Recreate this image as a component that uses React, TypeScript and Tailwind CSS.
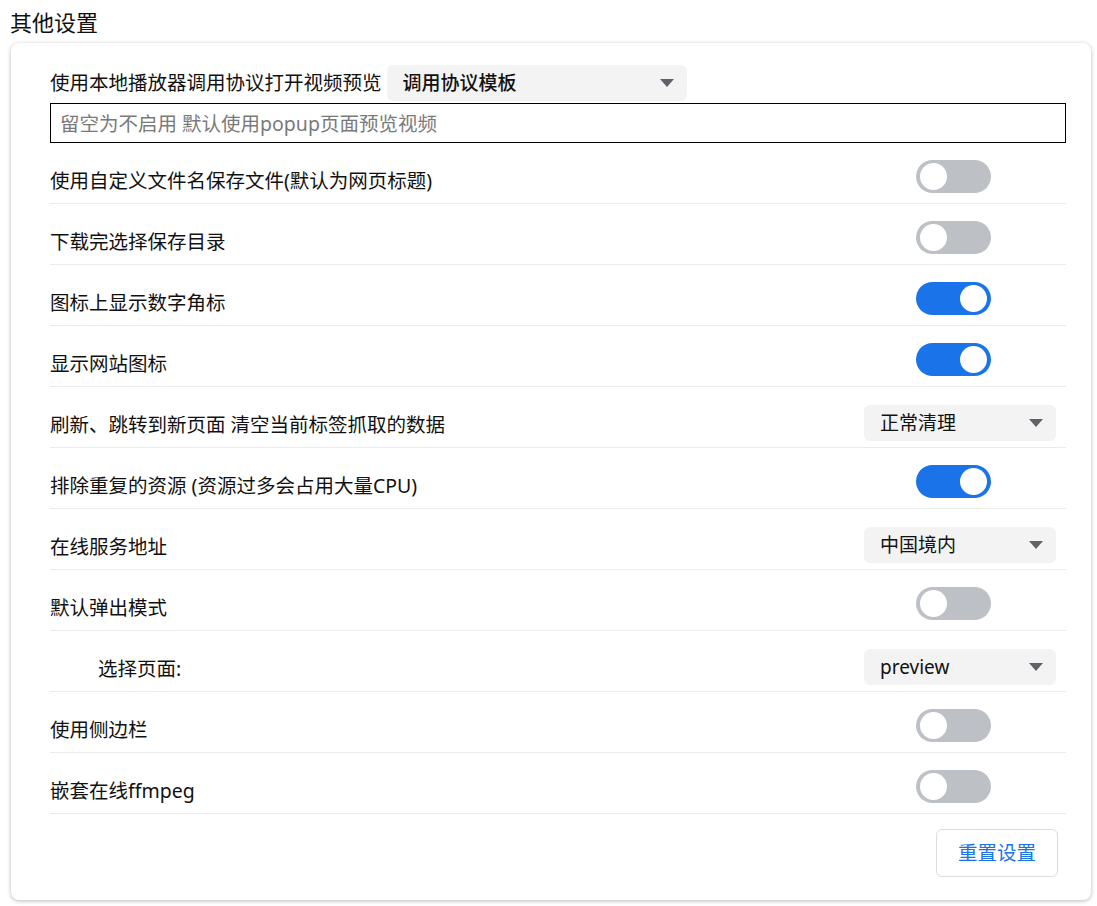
import React, { useState } from "react";

const FONT = {
  fontFamily: '"Noto Sans", "Noto Sans CJK SC", sans-serif',
};

const Toggle = ({ on, onChange }: { on: boolean; onChange: () => void }) => (
  <button
    onClick={onChange}
    className={`flex items-center w-[75px] h-[33px] rounded-full px-[4px] ${
      on ? "bg-[#1a73e8] justify-end" : "bg-[#bdc1c6] justify-start"
    }`}
  >
    <span className="block w-[27px] h-[27px] rounded-full bg-white" />
  </button>
);

const Select = ({ value, className = "" }: { value: string; className?: string }) => (
  <div
    className={`flex items-center justify-between h-[36px] rounded-md bg-[#f3f3f3] pl-4 pr-[13px] ${className}`}
  >
    <span className="text-[19px] leading-none text-[#111]">{value}</span>
    <svg width="14" height="8" viewBox="0 0 14 8">
      <path d="M0 0 L14 0 L7 8 Z" fill="#5f6368" />
    </svg>
  </div>
);

const Row = ({ children }: { children: React.ReactNode }) => (
  <div className="flex items-center justify-between h-[61px] pt-[12px] border-b border-[#ebebeb]">
    {children}
  </div>
);

// toggle sits a little higher than the selects in the rows
const ToggleCell = ({ on, onChange }: { on: boolean; onChange: () => void }) => (
  <div className="mr-[75px] mb-[6px]">
    <Toggle on={on} onChange={onChange} />
  </div>
);

export default function App() {
  const [toggles, setToggles] = useState<Record<string, boolean>>({
    filename: false,
    saveDir: false,
    badge: true,
    favicon: true,
    dedupe: true,
    popup: false,
    sidebar: false,
    ffmpeg: false,
  });

  const flip = (k: string) => setToggles((t) => ({ ...t, [k]: !t[k] }));

  const label = "text-[19.5px] leading-none text-[#111] mt-[4px]";

  return (
    <div className="bg-white min-h-screen w-[1097px] h-[906px] pt-[10px] pl-[10px] pr-[6px]" style={FONT}>
      <h2 className="text-[22px] leading-[24px] text-[#111] mb-[9px]">其他设置</h2>

      <div className="ml-[1px] rounded-lg bg-white shadow-[0_1px_4px_rgba(0,0,0,0.28)] pl-[39px] pr-[25px] pt-[22px] pb-[23px]">
        {/* Player protocol */}
        <div className="flex items-center">
          <span className="text-[19.5px] leading-none text-[#111]">使用本地播放器调用协议打开视频预览</span>
          <Select value="调用协议模板" className="ml-[5px] w-[300px] h-[35px] font-medium" />
        </div>
        <input
          className="mt-[2px] w-full h-[40px] border border-black px-[9px] text-[19.5px] text-[#111] placeholder:text-[#7a7a7a] outline-none"
          placeholder="留空为不启用 默认使用popup页面预览视频"
        />

        <Row>
          <span className={label}>使用自定义文件名保存文件(默认为网页标题)</span>
          <ToggleCell on={toggles.filename} onChange={() => flip("filename")} />
        </Row>
        <Row>
          <span className={label}>下载完选择保存目录</span>
          <ToggleCell on={toggles.saveDir} onChange={() => flip("saveDir")} />
        </Row>
        <Row>
          <span className={label}>图标上显示数字角标</span>
          <ToggleCell on={toggles.badge} onChange={() => flip("badge")} />
        </Row>
        <Row>
          <span className={label}>显示网站图标</span>
          <ToggleCell on={toggles.favicon} onChange={() => flip("favicon")} />
        </Row>
        <Row>
          <span className={label}>刷新、跳转到新页面 清空当前标签抓取的数据</span>
          <Select value="正常清理" className="mr-[10px] w-[192px]" />
        </Row>
        <Row>
          <span className={label}>排除重复的资源 (资源过多会占用大量CPU)</span>
          <ToggleCell on={toggles.dedupe} onChange={() => flip("dedupe")} />
        </Row>
        <Row>
          <span className={label}>在线服务地址</span>
          <Select value="中国境内" className="mr-[10px] w-[192px]" />
        </Row>
        <Row>
          <span className={label}>默认弹出模式</span>
          <ToggleCell on={toggles.popup} onChange={() => flip("popup")} />
        </Row>
        <Row>
          <span className={`${label} pl-[48px]`}>选择页面:</span>
          <Select value="preview" className="mr-[10px] w-[192px]" />
        </Row>
        <Row>
          <span className={label}>使用侧边栏</span>
          <ToggleCell on={toggles.sidebar} onChange={() => flip("sidebar")} />
        </Row>
        <Row>
          <span className={label}>嵌套在线ffmpeg</span>
          <ToggleCell on={toggles.ffmpeg} onChange={() => flip("ffmpeg")} />
        </Row>

        <div className="flex justify-end mt-[15px] mr-[8px]">
          <button className="w-[122px] h-[48px] rounded-md border border-[#dadce0] text-[19.5px] text-[#1a73e8] bg-white">
            重置设置
          </button>
        </div>
      </div>
    </div>
  );
}
